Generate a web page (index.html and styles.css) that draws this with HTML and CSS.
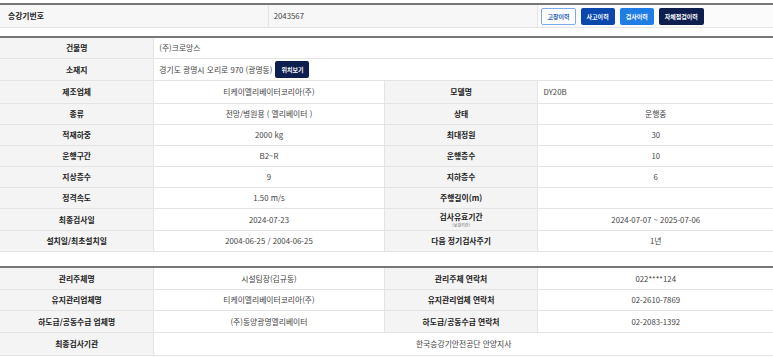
FILE: index.html
```html
<!DOCTYPE html>
<html lang="ko">
<head>
<meta charset="utf-8">
<link rel="stylesheet" href="styles.css">
</head>
<body>
<table class="tbl top">
  <colgroup><col class="ta"><col class="tb"><col class="tc"></colgroup>
  <tr>
    <th class="lbl left">승강기번호</th>
    <td class="val num">2043567</td>
    <td class="btncell">
      <div class="btns">
        <span class="btn outline">고장이력</span>
        <span class="btn blue">사고이력</span>
        <span class="btn sky">검사이력</span>
        <span class="btn navy">자체점검이력</span>
      </div>
    </td>
  </tr>
</table>

<table class="tbl mid">
  <colgroup><col class="ca"><col class="cb"><col class="ca"><col class="cd"></colgroup>
  <tr><th class="lbl">건물명</th><td class="val left" colspan="3">(주)크로앙스</td></tr>
  <tr class="h22"><th class="lbl">소재지</th><td class="val left" colspan="3"><div class="addr">경기도 광명시 오리로 970 (광명동) <span class="btn navy loc">위치보기</span></div></td></tr>
  <tr class="h23"><th class="lbl">제조업체</th><td class="val">티케이엘리베이터코리아(주)</td><th class="lbl">모델명</th><td class="val left">DY20B</td></tr>
  <tr><th class="lbl">종류</th><td class="val">전망/병원용 ( 엘리베이터 )</td><th class="lbl">상태</th><td class="val">운행중</td></tr>
  <tr><th class="lbl">적재하중</th><td class="val">2000 kg</td><th class="lbl">최대정원</th><td class="val">30</td></tr>
  <tr><th class="lbl">운행구간</th><td class="val">B2~R</td><th class="lbl">운행층수</th><td class="val">10</td></tr>
  <tr><th class="lbl">지상층수</th><td class="val">9</td><th class="lbl">지하층수</th><td class="val">6</td></tr>
  <tr><th class="lbl">정격속도</th><td class="val">1.50 m/s</td><th class="lbl">주행길이(m)</th><td class="val"></td></tr>
  <tr class="h22"><th class="lbl">최종검사일</th><td class="val">2024-07-23</td><th class="lbl"><div class="two">검사유효기간<span class="tiny">(보완기간)</span></div></th><td class="val">2024-07-07 ~ 2025-07-06</td></tr>
  <tr><th class="lbl">설치일/최초설치일</th><td class="val">2004-06-25 / 2004-06-25</td><th class="lbl">다음 정기검사주기</th><td class="val">1년</td></tr>
</table>

<table class="tbl bot">
  <colgroup><col class="ca"><col class="cb"><col class="ca"><col class="cd"></colgroup>
  <tr class="h22"><th class="lbl">관리주체명</th><td class="val">시설팀장(김규동)</td><th class="lbl">관리주체 연락처</th><td class="val">022****124</td></tr>
  <tr><th class="lbl">유지관리업체명</th><td class="val">티케이엘리베이터코리아(주)</td><th class="lbl">유지관리업체 연락처</th><td class="val">02-2610-7869</td></tr>
  <tr class="h22"><th class="lbl">하도급/공동수급 업체명</th><td class="val">(주)동양광명엘리베이터</td><th class="lbl">하도급/공동수급 연락처</th><td class="val">02-2083-1392</td></tr>
  <tr class="h23"><th class="lbl">최종검사기관</th><td class="val" colspan="3">한국승강기안전공단 안양지사</td></tr>
</table>
</body>
</html>
```

FILE: styles.css
```css
html, body {
  margin: 0;
  padding: 0;
  background: #fff;
}
body {
  font-family: "Noto Sans CJK KR", "Noto Sans", sans-serif;
  font-size: 7.8px;
  color: #444;
  padding-top: 3px;
}
.tbl {
  width: 100%;
  table-layout: fixed;
  border-collapse: collapse;
  border-top: 2px solid #777;
}
.ta { width: 34.7%; }
.tb { width: 34.9%; }
.tc { width: 30.4%; }
.ca { width: 19.9%; }
.cb { width: 29.8%; }
.cd { width: 30.4%; }
.tbl th, .tbl td {
  border-bottom: 1px solid #e4e4e4;
  border-left: 1px solid #e4e4e4;
  padding: 0 5px;
  height: 20px;
  line-height: 10px;
  vertical-align: middle;
  text-align: center;
}
.tbl tr > :first-child { border-left: none; }
.tbl .h22 > * { height: 21px; }
.tbl .h23 > * { height: 22px; }
.lbl {
  background: #f4f4f4;
  color: #222;
  font-weight: 700;
}
.val {
  background: #fff;
  color: #444;
  font-weight: 400;
}
.left { text-align: left !important; }
.lbl.left { padding-left: 8px; }
.top th, .top td { height: 22px; }
.top .lbl, .top .val { background: #f7f7f7; }
.top .btncell { background: #fbfbfb; padding: 0 3px; }
.top .num { padding-left: 5px; text-align: left; }
.btns {
  display: flex;
  gap: 5px;
  align-items: center;
}
.btn {
  display: inline-block;
  box-sizing: border-box;
  font-size: 6px;
  font-weight: 700;
  line-height: 15px;
  height: 17px;
  padding: 0 5px;
  border-radius: 2px;
  border: 1px solid transparent;
  color: #fff;
  white-space: nowrap;
}
.btn.outline { background: #fff; border-color: #7aaaf0; color: #2a5db8; }
.btn.blue { background: #0b48ad; }
.btn.sky { background: #1f7de6; }
.btn.navy { background: #0e1f4f; }
.mid { margin-top: 8px; }
.bot { margin-top: 14px; }
.addr { display: flex; align-items: center; gap: 3px; }
.btn.loc { padding: 0 5px; }
.two { display: flex; flex-direction: column; align-items: center; line-height: 10px; }
.tiny { font-size: 4px; line-height: 6px; font-weight: 400; color: #555; }
```
